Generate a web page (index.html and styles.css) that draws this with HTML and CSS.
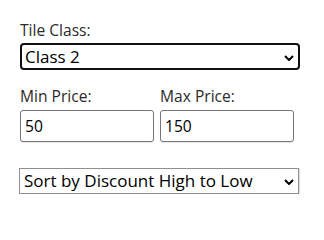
FILE: index.html
```html
<!DOCTYPE html>
<html>
<head>
<meta charset="utf-8">
<link rel="stylesheet" href="styles.css">
</head>
<body>
<form class="filters">
  <div class="field">
    <label class="label" for="tile">Tile Class:</label>
    <div class="select-wrap">
      <select id="tile" class="select select-focused">
        <option>Class 2</option>
      </select>
      <svg class="chev" width="10" height="6" viewBox="0 0 10 6"><path d="M1 1 L5 5 L9 1" fill="none" stroke="#000" stroke-width="2"/></svg>
    </div>
  </div>
  <div class="price-row">
    <div class="field price">
      <label class="label" for="min">Min Price:</label>
      <input id="min" class="input" type="text" value="50">
    </div>
    <div class="field price">
      <label class="label" for="max">Max Price:</label>
      <input id="max" class="input" type="text" value="150">
    </div>
  </div>
  <div class="select-wrap sort-wrap">
    <select class="select select-plain">
      <option>Sort by Discount High to Low</option>
    </select>
    <svg class="chev" width="10" height="6" viewBox="0 0 10 6"><path d="M1 1 L5 5 L9 1" fill="none" stroke="#000" stroke-width="2"/></svg>
  </div>
</form>
</body>
</html>
```
FILE: styles.css
```css
html, body {
  margin: 0;
  padding: 0;
  background: #ffffff;
}
body {
  font-family: "Open Sans", "Noto Sans", sans-serif;
  font-size: 15.6px;
  color: #000;
}
.filters {
  padding: 19px 0 0 20px;
  width: 280px;
  display: flex;
  flex-direction: column;
}
.label {
  display: block;
  line-height: 22px;
  color: #2b2b2b;
  height: 22px;
}
.select-wrap {
  position: relative;
}
.select {
  appearance: none;
  -webkit-appearance: none;
  font-family: inherit;
  font-size: 17px;
  color: #000;
  background: #fff;
  width: 280px;
  margin: 0;
  display: block;
  box-sizing: border-box;
}
.select-focused {
  margin-top: 2px;
  height: 27px;
  border: 2px solid #111;
  border-radius: 4px;
  padding: 0 0 0 3px;
  line-height: 23px;
}
.select-plain {
  height: 26px;
  border: 1px solid #8f8f8f;
  border-radius: 0;
  padding: 0 0 0 4px;
  line-height: 24px;
  box-shadow: 1px 1px 1px rgba(0,0,0,0.12);
}
.chev {
  position: absolute;
  right: 6px;
  top: 50%;
  margin-top: -2px;
  pointer-events: none;
}
.sort-wrap .chev {
  margin-top: -2px;
}
.price-row {
  display: flex;
  gap: 6px;
  margin-top: 15px;
}
.price .label {
  margin-bottom: 3px;
}
.input {
  font: inherit;
  color: #000;
  width: 134px;
  height: 32px;
  box-sizing: border-box;
  border: 1px solid #767676;
  border-radius: 3px;
  padding: 0 0 0 4px;
  margin: 0;
  box-shadow: 0 1px 1px rgba(0,0,0,0.1);
}
.sort-wrap {
  margin-top: 26px;
  margin-left: -1px;
}
```
